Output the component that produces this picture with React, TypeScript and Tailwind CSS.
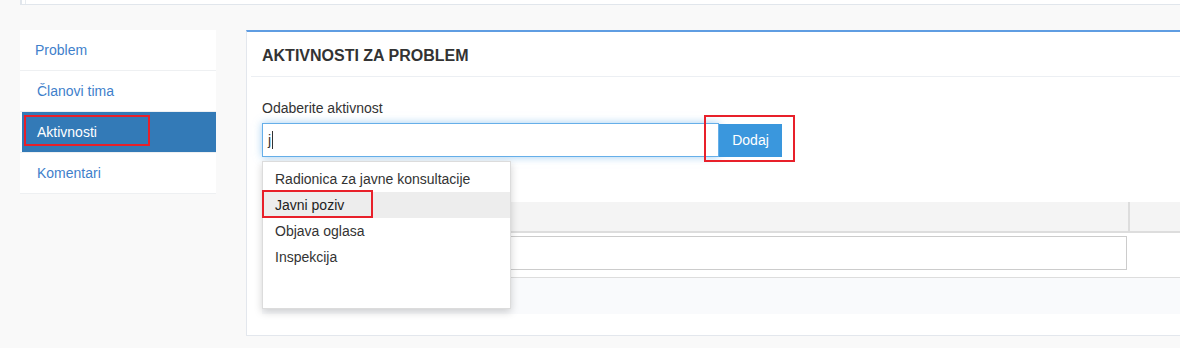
import React from 'react';

const tabs = [
    { label: 'Problem', active: false, pad: 'pl-[15px]' },
    { label: 'Članovi tima', active: false, pad: 'pl-[17px]' },
    { label: 'Aktivnosti', active: true, pad: 'pl-[15px]' },
    { label: 'Komentari', active: false, pad: 'pl-[17px]' },
];

const options = ['Radionica za javne konsultacije', 'Javni poziv', 'Objava oglasa', 'Inspekcija'];

const App: React.FC = () => {
    return (
        <div className="w-[1180px] h-[348px] overflow-hidden bg-[#f9f9f9] text-[14px] text-[#333] font-['Liberation_Sans',Arial,sans-serif]">
            {/* top strip */}
            <div className="ml-[20px] h-[5px] bg-white border-l-2 border-b border-[#e1e6ec]">
                <div className="ml-[3px] h-full border-l border-[#e8ecf0]"></div>
            </div>

            <div className="flex mt-[25px]">
                {/* sidebar */}
                <div className="ml-[20px] w-[196px] shrink-0 bg-white self-start">
                    {tabs.map((tab) => (
                        <div key={tab.label} className="h-[41px] border-b border-[#eef0f2] flex">
                            {tab.active ? (
                                <div className="relative ml-[2px] flex-1 bg-[#337ab7] text-white flex items-center pl-[15px]">
                                    Aktivnosti
                                    <div className="absolute left-[2px] top-[3px] w-[126px] h-[31px] border-2 border-[#e8202a]"></div>
                                </div>
                            ) : (
                                <div className={`flex-1 flex items-center ${tab.pad} text-[#3f7fcb]`}>{tab.label}</div>
                            )}
                        </div>
                    ))}
                </div>

                {/* main panel */}
                <div className="ml-[30px] w-[960px] shrink-0 bg-white border-t-2 border-[#5f9de2] border-l border-b border-l-[#e3e7ed] border-b-[#e3e7ed]">
                    <div className="h-[44px] flex items-center pt-[3px] pl-[15px] text-[16px] font-bold">AKTIVNOSTI ZA PROBLEM</div>
                    <div className="ml-[4px] border-b border-[#eceff3]"></div>

                    <div className="pl-[15px] pt-[21px] pb-[21px]">
                        <div className="h-[20px] leading-[20px]">Odaberite aktivnost</div>
                        <div className="relative mt-[5px] flex items-start">
                            <div className="w-[457px] h-[34px] border border-[#66afe9] shadow-[0_0_8px_rgba(102,175,233,0.6)] flex items-center pl-[5px]">
                                j<span className="inline-block w-px h-[18px] bg-[#333] ml-px"></span>
                            </div>
                            <button className="mt-px w-[63px] h-[33px] bg-[#3a97dd] text-white">Dodaj</button>
                            <div className="absolute left-[442px] top-[-8px] w-[91px] h-[47px] border-2 border-[#e8202a]"></div>

                            {/* autocomplete dropdown */}
                            <div className="absolute left-0 top-[38px] w-[249px] h-[148px] bg-white border border-[#dcdcdc] shadow-[0_3px_8px_rgba(0,0,0,0.18)] pt-[4px] z-10">
                                {options.map((opt) => (
                                    <div
                                        key={opt}
                                        className={`h-[26px] flex items-center pl-[12px] ${opt === 'Javni poziv' ? 'bg-[#ededed] text-[#222]' : ''}`}
                                    >
                                        {opt}
                                    </div>
                                ))}
                                <div className="absolute left-[-1px] top-[28px] w-[111px] h-[28px] border-2 border-[#e8202a]"></div>
                            </div>
                        </div>

                        {/* table */}
                        <div className="mt-[45px]">
                            <div className="flex h-[31px] bg-[#f4f4f4] border-b-2 border-[#dddddd]">
                                <div className="w-[868px] border-r-2 border-[#dddddd]"></div>
                                <div className="flex-1"></div>
                            </div>
                            <div className="h-[45px] pt-[3px] border-b border-[#dddddd]">
                                <div className="w-[865px] h-[34px] border border-[#cccccc]"></div>
                            </div>
                            <div className="h-[36px] bg-[#f9fafc]"></div>
                        </div>
                    </div>
                </div>
            </div>
        </div>
    );
};

export default App;
